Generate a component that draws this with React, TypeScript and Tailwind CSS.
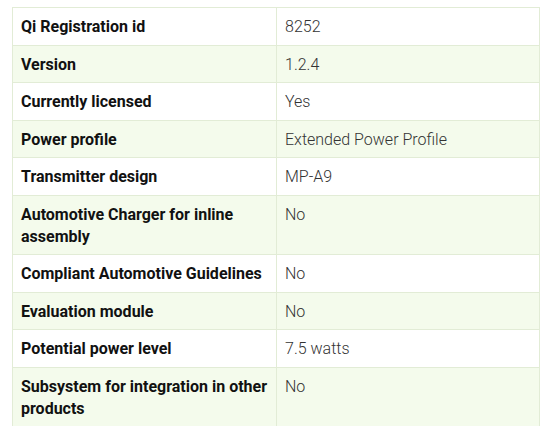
import React from "react";

const rows: [string, string][] = [
  ["Qi Registration id", "8252"],
  ["Version", "1.2.4"],
  ["Currently licensed", "Yes"],
  ["Power profile", "Extended Power Profile"],
  ["Transmitter design", "MP-A9"],
  ["Automotive Charger for inline assembly", "No"],
  ["Compliant Automotive Guidelines", "No"],
  ["Evaluation module", "No"],
  ["Potential power level", "7.5 watts"],
  ["Subsystem for integration in other products", "No"],
];

export default function App() {
  return (
    <div className="w-[550px] h-[443px] bg-white pt-[7px] pl-[12px]" style={{ fontFamily: "Roboto, 'Liberation Sans', sans-serif" }}>
      <div className="w-[528px] border border-b-0 border-[#e2ecd6]">
        {rows.map(([k, v], i) => (
          <div
            key={k}
            className={`grid grid-cols-[264px_1fr] ${i > 0 ? "border-t border-[#e2ecd6]" : ""} ${i % 2 === 1 ? "bg-[#f4fbec]" : "bg-white"}`}
          >
            <div className="pl-[8px] pr-2 pt-[8px] pb-[6.5px] text-[16px] leading-[22px] font-bold text-[#111] border-r border-[#e2ecd6]">
              {k}
            </div>
            <div className="pl-[8px] pt-[8px] pb-[6.5px] text-[16px] leading-[22px] font-light text-[#333]">
              {v}
            </div>
          </div>
        ))}
      </div>
    </div>
  );
}
